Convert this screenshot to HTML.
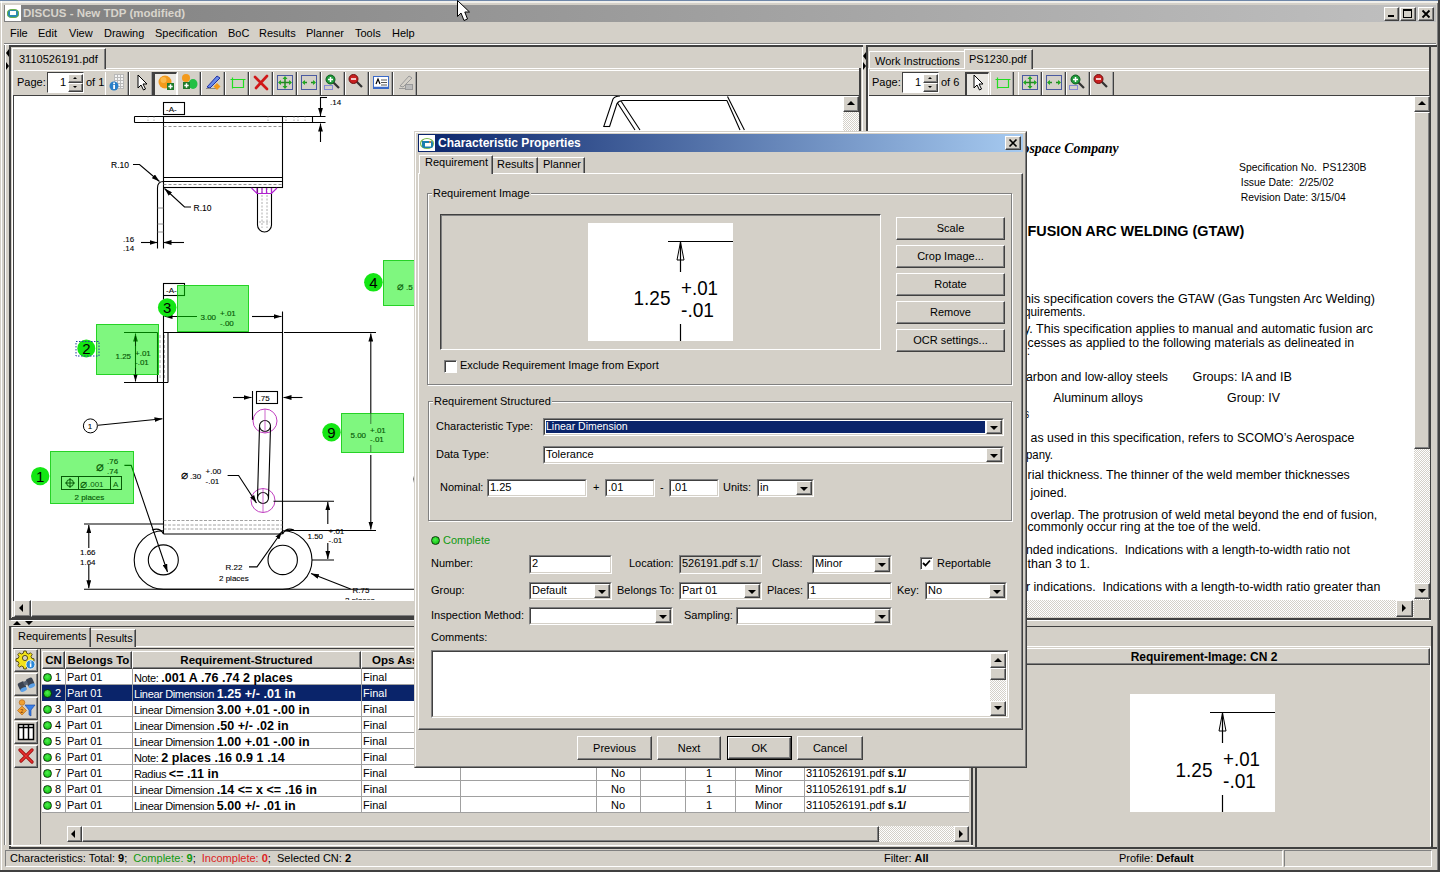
<!DOCTYPE html>
<html><head><meta charset="utf-8">
<style>
*{box-sizing:border-box;margin:0;padding:0}
html,body{width:1440px;height:872px;overflow:hidden;background:#d4d0c8;font-family:"Liberation Sans",sans-serif;font-size:11px;color:#000}
.a{position:absolute}
.t{position:absolute;white-space:nowrap;line-height:1}
.raised{background:#d4d0c8;border:1px solid;border-color:#fff #404040 #404040 #fff;box-shadow:inset -1px -1px 0 #808080}
.sunken{border:1px solid;border-color:#808080 #fff #fff #808080;box-shadow:inset 1px 1px 0 #404040}
.white{background:#fff}
.tb{position:absolute;width:23px;height:22px;background:#d4d0c8;border:1px solid;border-color:#fff #808080 #808080 #fff}
.hatch{background:repeating-conic-gradient(#d4d0c8 0 25%,#fff 0 50%) 0 0/2px 2px}
</style></head><body>
<!-- window frame -->
<div class="a" style="left:0;top:0;width:1440px;height:1px;background:#6f87a8"></div>
<div class="a" style="left:0;top:1px;width:1440px;height:2px;background:#f0efeb"></div><div class="a" style="left:1px;top:1px;width:1px;height:871px;background:#fff"></div>
<!-- title bar -->
<div class="a" style="left:4px;top:5px;width:1432px;height:17px;background:linear-gradient(90deg,#808080,#c0c0c0)"></div>
<div class="a" style="left:5px;top:5px;width:16px;height:16px;background:#fff"></div>
<div class="a" style="left:7px;top:9px;width:12px;height:9px;border-radius:40%;background:#2a8ab0;border:1px solid #6ab04a"></div>
<div class="a" style="left:10px;top:11px;width:6px;height:4px;background:#fff"></div>
<div class="t" style="left:23px;top:8px;font-size:11.5px;font-weight:bold;color:#d8d4cc">DISCUS - New TDP (modified)</div>
<div class="a raised" style="left:1384px;top:7px;width:15px;height:14px"></div>
<div class="a" style="left:1388px;top:15px;width:6px;height:2px;background:#000"></div>
<div class="a raised" style="left:1400px;top:7px;width:16px;height:14px"></div>
<div class="a" style="left:1403px;top:9px;width:9px;height:9px;border:1px solid #000;border-top-width:2px"></div>
<div class="a raised" style="left:1418px;top:7px;width:16px;height:14px"></div>
<svg class="a" style="left:1418px;top:7px" width="16" height="14" viewBox="0 0 16 14"><path d="M4.5 3.5l7 7M11.5 3.5l-7 7" stroke="#000" stroke-width="1.8"/></svg>
<div class="a" style="left:1438px;top:0;width:2px;height:872px;background:#404040"></div>
<div class="a" style="left:1437px;top:3px;width:1px;height:869px;background:#808080"></div>
<!-- menu -->
<div class="t" style="left:10px;top:28px;font-size:11px">File</div>
<div class="t" style="left:38px;top:28px;font-size:11px">Edit</div>
<div class="t" style="left:69px;top:28px;font-size:11px">View</div>
<div class="t" style="left:104px;top:28px;font-size:11px">Drawing</div>
<div class="t" style="left:155px;top:28px;font-size:11px">Specification</div>
<div class="t" style="left:228px;top:28px;font-size:11px">BoC</div>
<div class="t" style="left:259px;top:28px;font-size:11px">Results</div>
<div class="t" style="left:306px;top:28px;font-size:11px">Planner</div>
<div class="t" style="left:355px;top:28px;font-size:11px">Tools</div>
<div class="t" style="left:392px;top:28px;font-size:11px">Help</div>
<div class="a" style="left:4px;top:43px;width:1432px;height:1px;background:#808080"></div>
<div class="a" style="left:4px;top:44px;width:1432px;height:1px;background:#fff"></div>

<!-- LEFT PANE -->
<div class="a" style="left:4px;top:45px;width:1px;height:800px;background:#808080"></div>
<div class="a" style="left:5px;top:45px;width:1px;height:800px;background:#fff"></div>
<div class="a" style="left:9px;top:45px;width:2px;height:575px;background:#404040"></div>
<div class="a" style="left:9px;top:45px;width:854px;height:2px;background:#404040"></div>
<div class="a" style="left:6px;top:49px;width:0;height:0;border:4px solid transparent;border-right:3px solid #000;border-left:0"></div>
<div class="a" style="left:6px;top:62px;width:0;height:0;border:4px solid transparent;border-left:3px solid #000;border-right:0"></div>
<!-- tab -->
<div class="a" style="left:12px;top:48px;width:94px;height:21px;border-top:1px solid #fff;border-left:1px solid #fff;border-right:1px solid #404040;box-shadow:inset -1px 0 0 #808080"></div>
<div class="t" style="left:19px;top:54px;font-size:11px">3110526191.pdf</div>
<div class="a" style="left:12px;top:68px;width:1px;height:550px;background:#fff"></div>
<div class="a" style="left:106px;top:68px;width:754px;height:1px;background:#fff"></div>
<div class="a" style="left:859px;top:68px;width:2px;height:550px;background:#404040"></div>
<div class="a" style="left:12px;top:617px;width:849px;height:2px;background:#404040"></div>
<!-- toolbar -->
<div class="a" style="left:14px;top:70px;width:845px;height:25px;background:#d4d0c8;border-top:1px solid #fff"></div>
<div class="t" style="left:17px;top:77px;font-size:11px">Page:</div>
<div class="a" style="left:47px;top:72px;width:37px;height:21px;background:#fff;border:1px solid;border-color:#404040 #fff #fff #404040"></div>
<div class="t" style="left:60px;top:77px;font-size:11px">1</div>
<div class="a raised" style="left:68px;top:74px;width:15px;height:9px"></div>
<div class="a raised" style="left:68px;top:83px;width:15px;height:9px"></div><div class="a" style="left:73px;top:77px;border:2.5px solid transparent;border-bottom:2.5px solid #000;border-top:0"></div><div class="a" style="left:73px;top:86px;border:2.5px solid transparent;border-top:2.5px solid #000;border-bottom:0"></div>
<div class="t" style="left:86px;top:77px;font-size:11px">of 1</div>
<div class="a" style="left:105px;top:72px;width:24px;height:23px;border-left:1px solid #fff;border-right:1px solid #404040;box-shadow:inset -1px 0 0 #a0a0a0"></div>
<svg class="a" style="left:106px;top:72px" width="22" height="22" viewBox="0 0 22 22"><g stroke="#b8b8b8" stroke-width="1" fill="#f4f4f4"><rect x="8.5" y="2.5" width="9" height="14"/></g><path d="M11.5 2.5v14M14.5 2.5v14M8.5 5.5h9M8.5 8.5h9M8.5 11.5h9M8.5 14.5h9" stroke="#b8b8b8"/><circle cx="8" cy="14" r="4.5" fill="#2a7fc8"/><rect x="7.2" y="13" width="1.8" height="4" fill="#fff"/><rect x="7.2" y="10.6" width="1.8" height="1.6" fill="#fff"/></svg>
<div class="a" style="left:129px;top:72px;width:24px;height:23px;border-left:1px solid #fff;border-right:1px solid #404040;box-shadow:inset -1px 0 0 #a0a0a0"></div>
<svg class="a" style="left:130px;top:72px" width="22" height="22" viewBox="0 0 22 22"><path d="M8 3v13l3-3 2.5 5 2-1-2.5-5h4z" fill="#fff" stroke="#000" stroke-width="1"/></svg>
<div class="a" style="left:153px;top:72px;width:24px;height:23px;background:#e9e7e2;border-top:2px solid #404040;border-left:2px solid #404040;border-right:1px solid #fff"></div>
<svg class="a" style="left:154px;top:72px" width="22" height="22" viewBox="0 0 22 22"><circle cx="11" cy="10" r="6.5" fill="#f39a1c"/><circle cx="9.5" cy="8" r="3" fill="#ffd070" opacity=".6"/><rect x="13" y="11" width="7" height="7" fill="#1e7a2a"/><path d="M16.5 12.3v4.4M14.3 14.5h4.4" stroke="#fff" stroke-width="1.5"/></svg>
<div class="a" style="left:177px;top:72px;width:24px;height:23px;border-left:1px solid #fff;border-right:1px solid #404040;box-shadow:inset -1px 0 0 #a0a0a0"></div>
<svg class="a" style="left:178px;top:72px" width="22" height="22" viewBox="0 0 22 22"><circle cx="8" cy="6" r="4" fill="#f39a1c"/><ellipse cx="15" cy="12" rx="4.5" ry="5" fill="#22c044"/><rect x="5" y="10" width="7" height="7" fill="#1e7a2a"/><path d="M8.5 11.3v4.4M6.3 13.5h4.4" stroke="#fff" stroke-width="1.5"/></svg>
<div class="a" style="left:201px;top:72px;width:24px;height:23px;border-left:1px solid #fff;border-right:1px solid #404040;box-shadow:inset -1px 0 0 #a0a0a0"></div>
<svg class="a" style="left:202px;top:72px" width="22" height="22" viewBox="0 0 22 22"><path d="M5 15L15 4l3 2L8 16z" fill="#6a8ae8" stroke="#2030a0" stroke-width="1"/><path d="M4 16.5h10" stroke="#888"/><path d="M15 11l3.5 3.5L15 18l-3.5-3.5z" fill="#f39a1c"/></svg>
<div class="a" style="left:225px;top:72px;width:24px;height:23px;border-left:1px solid #fff;border-right:1px solid #404040;box-shadow:inset -1px 0 0 #a0a0a0"></div>
<svg class="a" style="left:226px;top:72px" width="22" height="22" viewBox="0 0 22 22"><path d="M4.5 7.5h15M6.5 5.5v11M6.5 15.5h11V7.5" stroke="#22dd22" stroke-width="1.2" fill="none"/></svg>
<div class="a" style="left:249px;top:72px;width:24px;height:23px;border-left:1px solid #fff;border-right:1px solid #404040;box-shadow:inset -1px 0 0 #a0a0a0"></div>
<svg class="a" style="left:250px;top:72px" width="22" height="22" viewBox="0 0 22 22"><path d="M5 5l12 12M17 4L6 16" stroke="#d01818" stroke-width="2.6" stroke-linecap="round"/></svg>
<div class="a" style="left:273px;top:72px;width:24px;height:23px;border-left:1px solid #fff;border-right:1px solid #404040;box-shadow:inset -1px 0 0 #a0a0a0"></div>
<svg class="a" style="left:274px;top:72px" width="22" height="22" viewBox="0 0 22 22"><rect x="3.5" y="3.5" width="15" height="14" fill="none" stroke="#4a5aa0"/><path d="M11 5v11M5 10.5h12" stroke="#228822" stroke-width="1.5"/><path d="M11 4l-2.5 3h5zM11 17l-2.5-3h5zM4 10.5l3-2.5v5zM18 10.5l-3-2.5v5z" fill="#22aa22"/></svg>
<div class="a" style="left:297px;top:72px;width:24px;height:23px;border-left:1px solid #fff;border-right:1px solid #404040;box-shadow:inset -1px 0 0 #a0a0a0"></div>
<svg class="a" style="left:298px;top:72px" width="22" height="22" viewBox="0 0 22 22"><rect x="3.5" y="3.5" width="15" height="14" fill="none" stroke="#4a5aa0"/><path d="M5 10.5h4M13 10.5h4" stroke="#228822" stroke-width="1.5"/><path d="M4 10.5l3-2.5v5zM18 10.5l-3-2.5v5z" fill="#22aa22"/></svg>
<div class="a" style="left:321px;top:72px;width:24px;height:23px;border-left:1px solid #fff;border-right:1px solid #404040;box-shadow:inset -1px 0 0 #a0a0a0"></div>
<svg class="a" style="left:322px;top:72px" width="22" height="22" viewBox="0 0 22 22"><path d="M11 10l6 6" stroke="#333" stroke-width="2.2"/><circle cx="8.5" cy="7.5" r="4.5" fill="#1f9a3a" stroke="#0b5a1b"/><path d="M8.5 5v5M6 7.5h5" stroke="#fff" stroke-width="1.5"/><rect x="2.5" y="13.5" width="8" height="4" fill="none" stroke="#3344dd" stroke-dasharray="1 1"/></svg>
<div class="a" style="left:345px;top:72px;width:24px;height:23px;border-left:1px solid #fff;border-right:1px solid #404040;box-shadow:inset -1px 0 0 #a0a0a0"></div>
<svg class="a" style="left:346px;top:72px" width="22" height="22" viewBox="0 0 22 22"><path d="M10 9l6 6" stroke="#333" stroke-width="2.2"/><circle cx="7.5" cy="7" r="4.5" fill="#c82020" stroke="#701010"/><path d="M5 7h5" stroke="#fff" stroke-width="1.5"/></svg>
<div class="a" style="left:369px;top:72px;width:24px;height:23px;border-left:1px solid #fff;border-right:1px solid #404040;box-shadow:inset -1px 0 0 #a0a0a0"></div>
<svg class="a" style="left:370px;top:72px" width="22" height="22" viewBox="0 0 22 22"><rect x="3.5" y="4.5" width="15" height="12" fill="#fff" stroke="#3a6ac8"/><path d="M3.5 15.5h15" stroke="#3a6ac8" stroke-width="1.5"/><path d="M6 12l2-5 2 5" stroke="#000" stroke-width="1.2" fill="none"/><path d="M11 8h6M11 10.5h6M11 13h6" stroke="#555"/></svg>
<div class="a" style="left:393px;top:72px;width:24px;height:23px;border-left:1px solid #fff;border-right:1px solid #404040;box-shadow:inset -1px 0 0 #a0a0a0"></div>
<svg class="a" style="left:394px;top:72px" width="22" height="22" viewBox="0 0 22 22"><path d="M6 14L15 4l3 2L9 15z" fill="none" stroke="#999"/><path d="M5 16.5h7" stroke="#999"/><rect x="11.5" y="12.5" width="7" height="5" fill="#bbb" stroke="#999"/></svg>
<!-- drawing area -->
<div class="a" style="left:13px;top:95px;width:846px;height:1px;background:#404040"></div>
<div class="a" style="left:13px;top:95px;width:1px;height:506px;background:#404040"></div>
<div class="a white" style="left:14px;top:96px;width:829px;height:504px;overflow:hidden" id="drawing"><svg class="a" style="left:0;top:0" width="829" height="504" viewBox="14 96 829 504" font-family="Liberation Sans, sans-serif">
<defs>
<marker id="ar" viewBox="0 0 10 6" refX="10" refY="3" markerWidth="8" markerHeight="5" orient="auto-start-reverse" markerUnits="userSpaceOnUse"><path d="M0 0L10 3L0 6z" fill="#000"/></marker>
</defs>
<g fill="none" stroke="#000" stroke-width="1.1">
<!-- top view -->
<rect x="163.5" y="102.5" width="21" height="12"/>
<path d="M134.5 116.5H325.5M134.5 122.5H325.5M134.5 116.5V122.5"/>
<rect x="163.5" y="116.5" width="119" height="71"/>
<path d="M163.5 177.5H282.5M163.5 181.5H282.5"/>
<path d="M163.5 126.5H282.5M163.5 184.5H282.5" stroke-dasharray="3 2" stroke="#777" stroke-width=".8"/>
<path d="M148 116.5V122.5M154 116.5V122.5M268 116.5V122.5M294 116.5V122.5M305 116.5V122.5" stroke="#999" stroke-width=".8" stroke-dasharray="1.5 1.5"/>
<path d="M163.5 181.5Q157.5 181.5 157.5 188V248.5M163.5 188V248.5"/>
<path d="M157.5 208h6M157.5 224h6M157.5 232h6" stroke="#777" stroke-width=".8"/>
<path d="M141 242.5H157.5" marker-end="url(#ar)"/><path d="M184 242.5H163.5" marker-end="url(#ar)"/>
<path d="M133 164.5H139.5L159.5 181.5" marker-end="url(#ar)"/>
<path d="M191 207H184.5L164.5 188.5" marker-end="url(#ar)"/>
<path d="M257.5 188V225A7 7 0 0 0 271.5 225V188"/>
<path d="M262 188V228M267 188V228M259 222H270" stroke="#999" stroke-width=".8" stroke-dasharray="2 1.5"/>
<path d="M251.5 188L257 193.5H271.5L277 188M257 188V193.5M262 188V193.5M266.5 188V193.5M271.5 188V193.5" stroke="#b020d0" stroke-width="1.2"/>
<path d="M320.5 142V123.5" marker-end="url(#ar)"/><path d="M320.5 97V116" marker-end="url(#ar)"/>
<path d="M320.5 97.5H327"/><path d="M312.5 116.5V122.5"/><path d="M286 116.5V122.5M298 116.5V122.5" stroke="#888" stroke-width=".8" stroke-dasharray="1.5 1.5"/>
<!-- upper right trapezoid -->
<path d="M603.75 127V126.5L613 99Q615 96 620 96M609.4 127L617 103.5Q619 100.5 623 100.5H727M617.5 103L635 130M621 101L640 130M727.5 96.5L744.4 130M726.9 100.5L740 130"/>
<path d="M603.75 126.5H609.4"/>
<!-- main view body -->
<rect x="163.5" y="283.5" width="21" height="12"/>
<path d="M163.5 295.5V534M282.5 311.5V534M163.5 332.5H282.5M284 332.5H376M163.5 534H282.5"/>
<path d="M157.5 332.5V382.5M168 332.5V382.5M124 382.5H168M124 332.5H157.5"/>
<path d="M160 335V380M164.5 335V380" stroke="#999" stroke-width=".8" stroke-dasharray="3 2"/>
<path d="M135.5 357V333.5" marker-end="url(#ar)"/><path d="M135.5 357V381.5" marker-end="url(#ar)"/>
<path d="M197 316.5H164.5" marker-end="url(#ar)"/><path d="M252 316.5H281.5" marker-end="url(#ar)"/>
<path d="M163.5 520.5H282.5M163.5 525H282.5M163.5 529H282.5" stroke="#888" stroke-width=".8" stroke-dasharray="3 1.5"/>
<path d="M98 425.3L162.5 418.8" marker-end="url(#ar)"/>
<!-- .75 -->
<rect x="256.5" y="391.5" width="21" height="12"/>
<path d="M233 397.5H251.5" marker-end="url(#ar)"/><path d="M302.5 397.5H283.5" marker-end="url(#ar)"/>
<path d="M252.5 391V420"/>
<!-- slot -->
<circle cx="265" cy="421" r="12" stroke="#c040c0" stroke-width="1"/>
<circle cx="263" cy="500.5" r="12" stroke="#c040c0" stroke-width="1"/>
<circle cx="265" cy="426" r="5.5"/>
<circle cx="263" cy="498" r="5.5"/>
<path d="M259.5 427L257.5 498M270.5 427L268.5 498"/>
<path d="M265 409V433M263 488.5V512" stroke="#c040c0" stroke-width=".8"/>
<path d="M227.6 475.5H238.6L256.5 503" marker-end="url(#ar)"/>
<!-- 5.00 dim -->
<path d="M370.8 413V333.5" marker-end="url(#ar)"/>
<path d="M370.8 455V529.5" marker-end="url(#ar)"/>
<path d="M286 530.5H376"/>
<!-- base -->
<path d="M84 524H163.5M84 589.3H430"/>
<path d="M88.8 548V525" marker-end="url(#ar)"/><path d="M88.8 565V588.3" marker-end="url(#ar)"/>
<path d="M163.5 530.7A29.3 29.3 0 0 0 163.5 589.3M282.7 530.7A29.3 29.3 0 0 1 282.7 589.3M163.5 589.3H282.7"/>
<path d="M163.5 534Q160 527 152 530M282.7 534Q286 527 294 530"/>
<circle cx="163.3" cy="559.9" r="15"/>
<circle cx="282.7" cy="559.9" r="14.7"/>
<path d="M124.4 465.4H131.2L167.5 572" marker-end="url(#ar)"/>
<path d="M249 566.9H257L282 531.5" marker-end="url(#ar)"/>
<path d="M273.5 501.2H334M312 560H334"/>
<path d="M327.8 524V502" marker-end="url(#ar)"/><path d="M327.8 543V559" marker-end="url(#ar)"/>
<path d="M350.6 589L311 573.5" marker-end="url(#ar)"/>
<path d="M416 472Q412 479 416 486"/>
</g>
<g font-size="8.5" fill="#000" stroke="#000" stroke-width=".1">
<text x="166" y="111.5" font-size="8">-A-</text>
<text x="166" y="292.5" font-size="8">-A-</text>
<text x="330" y="105" font-size="8">.14</text>
<text x="111" y="167.5">R.10</text>
<text x="193.5" y="210.5">R.10</text>
<text x="123" y="241.5" font-size="8">.16</text>
<text x="123" y="251" font-size="8">.14</text>
<text x="258.5" y="401" font-size="8">.75</text>
<text x="80" y="554.5" font-size="8">1.66</text>
<text x="80" y="564.5" font-size="8">1.64</text>
<text x="225.5" y="570" font-size="8">R.22</text>
<text x="219" y="581" font-size="8" font-weight="normal">2 places</text>
<text x="307.5" y="538.5" font-size="8">1.50</text>
<text x="328.5" y="533.5" font-size="8">+.01</text>
<text x="328.5" y="542.5" font-size="8">-.01</text>
<text x="352.5" y="593" font-size="8">R.75</text>
<text x="345" y="603" font-size="8" font-weight="normal">2 places</text>
<text x="181" y="479" font-size="12" font-weight="normal">&#x2300;</text>
<text x="190" y="479" font-size="8">.30</text>
<text x="205.5" y="474" font-size="8">+.00</text>
<text x="205.5" y="483.5" font-size="8">-.01</text>
<circle cx="90.4" cy="425.9" r="7" fill="#fff" stroke="#000" stroke-width="1"/>
<text x="87.8" y="429" font-size="8" font-weight="normal">1</text>
</g>
<!-- green annotations -->
<g fill="rgba(0,240,0,0.5)" stroke="rgba(0,200,0,0.8)" stroke-width="1">
<rect x="177.5" y="285.5" width="71" height="46"/>
<rect x="96.5" y="324.5" width="62" height="50"/>
<rect x="50.5" y="451.5" width="83" height="52"/>
<rect x="341.5" y="413.5" width="62" height="39"/>
<rect x="383.5" y="260.5" width="60" height="45"/>
</g>
<g fill="#075a07" font-size="8" stroke="#075a07" stroke-width=".15">
<text x="200.5" y="320">3.00</text>
<text x="220" y="316">+.01</text>
<text x="220" y="325.5">-.00</text>
<text x="115.5" y="359">1.25</text>
<text x="135" y="355.5">+.01</text>
<text x="135" y="364.5">-.01</text>
<text x="350.5" y="437.5">5.00</text>
<text x="370" y="432.5">+.01</text>
<text x="370" y="441.5">-.01</text>
<text x="74.5" y="500">2 places</text>
<text x="96" y="471" font-size="13">&#x2300;</text>
<text x="107" y="464">.76</text>
<text x="107" y="473.5">.74</text>
<text x="397" y="290" font-size="11">&#x2300;</text>
<text x="406" y="290">.5</text>
</g>
<g fill="none" stroke="#075a07" stroke-width="1">
<rect x="61.5" y="476.5" width="60" height="13"/>
<path d="M78.5 476.5V489.5M110.5 476.5V489.5"/>
<circle cx="70" cy="483" r="3.5"/>
<path d="M65 483H75M70 478V488"/>
<path d="M135.5 336V346M135.5 368V380" stroke="rgba(0,0,0,.5)"/>
<path d="M370.8 413V424M370.8 445V452" stroke="rgba(0,0,0,.5)"/>
</g>
<g fill="#075a07" font-size="8">
<text x="79.5" y="487.5" font-size="12">&#x2300;</text>
<text x="88" y="486.5">.001</text>
<text x="113" y="486.5">A</text>
</g>
<g fill="#14e614">
<circle cx="167.2" cy="307.5" r="9.3"/>
<circle cx="86.3" cy="348.4" r="9"/>
<circle cx="40.2" cy="476.1" r="9.2"/>
<circle cx="331.5" cy="432.2" r="9.2"/>
<circle cx="373.4" cy="282.3" r="9.3"/>
</g>
<g fill="#000" font-size="15" text-anchor="middle" font-weight="normal">
<text x="167.2" y="313">3</text>
<text x="86.3" y="354">2</text>
<text x="40.2" y="481.5">1</text>
<text x="331.5" y="437.5">9</text>
<text x="373.4" y="287.8">4</text>
</g>
<rect x="76" y="341.5" width="23" height="14.5" fill="none" stroke="#2040a0" stroke-width="1" stroke-dasharray="1.5 1.5"/>
</svg>
</div>
<div class="a hatch" style="left:843px;top:96px;width:16px;height:504px"></div>
<div class="a raised" style="left:843px;top:96px;width:16px;height:16px"></div>
<div class="a" style="left:847px;top:101px;border:4px solid transparent;border-bottom:4px solid #000;border-top:0"></div>
<div class="a hatch" style="left:14px;top:600px;width:845px;height:17px"></div>
<div class="a raised" style="left:14px;top:600px;width:17px;height:17px"></div>
<div class="a" style="left:19px;top:604px;border:4px solid transparent;border-right:4px solid #000;border-left:0"></div>
<div class="a raised" style="left:31px;top:600px;width:700px;height:17px"></div>
<!-- RIGHT PANE -->
<div class="a" style="left:862px;top:47px;width:1px;height:573px;background:#fff"></div>
<div class="a" style="left:863px;top:52px;border:4px solid transparent;border-right:3px solid #000;border-left:0"></div>
<div class="a" style="left:863px;top:62px;border:4px solid transparent;border-left:3px solid #000;border-right:0"></div>
<div class="a" style="left:866px;top:45px;width:2px;height:575px;background:#404040"></div>
<div class="a" style="left:866px;top:45px;width:571px;height:2px;background:#404040"></div>
<div class="a" style="left:869px;top:51px;width:95px;height:18px;border-top:1px solid #fff;border-left:1px solid #fff"></div>
<div class="t" style="left:875px;top:56px;font-size:11px">Work Instructions</div>
<div class="a" style="left:964px;top:49px;width:69px;height:20px;border-top:1px solid #fff;border-left:1px solid #fff;border-right:1px solid #404040;box-shadow:inset -1px 0 0 #808080;background:#d4d0c8"></div>
<div class="t" style="left:969px;top:54px;font-size:11px">PS1230.pdf</div>
<div class="a" style="left:868px;top:68px;width:1px;height:550px;background:#fff"></div>
<div class="a" style="left:868px;top:68px;width:96px;height:1px;background:#fff"></div>
<div class="a" style="left:1033px;top:68px;width:397px;height:1px;background:#fff"></div>
<div class="a" style="left:1429px;top:47px;width:2px;height:573px;background:#404040"></div>
<div class="a" style="left:868px;top:618px;width:563px;height:2px;background:#404040"></div>
<div class="a" style="left:870px;top:70px;width:559px;height:25px;border-top:1px solid #fff"></div>
<div class="t" style="left:872px;top:77px;font-size:11px">Page:</div>
<div class="a" style="left:902px;top:72px;width:37px;height:21px;background:#fff;border:1px solid;border-color:#404040 #fff #fff #404040"></div>
<div class="t" style="left:915px;top:77px;font-size:11px">1</div>
<div class="a raised" style="left:923px;top:74px;width:15px;height:9px"></div>
<div class="a raised" style="left:923px;top:83px;width:15px;height:9px"></div><div class="a" style="left:928px;top:77px;border:2.5px solid transparent;border-bottom:2.5px solid #000;border-top:0"></div><div class="a" style="left:928px;top:86px;border:2.5px solid transparent;border-top:2.5px solid #000;border-bottom:0"></div>
<div class="t" style="left:941px;top:77px;font-size:11px">of 6</div>
<div class="a" style="left:965px;top:72px;width:24px;height:23px;background:#e9e7e2;border-top:2px solid #404040;border-left:2px solid #404040;border-right:1px solid #fff"></div>
<svg class="a" style="left:966px;top:72px" width="22" height="22" viewBox="0 0 22 22"><path d="M8 3v13l3-3 2.5 5 2-1-2.5-5h4z" fill="#fff" stroke="#000" stroke-width="1"/></svg>
<div class="a" style="left:990px;top:72px;width:24px;height:23px;border-left:1px solid #fff;border-right:1px solid #404040;box-shadow:inset -1px 0 0 #a0a0a0"></div>
<svg class="a" style="left:991px;top:72px" width="22" height="22" viewBox="0 0 22 22"><path d="M4.5 7.5h15M6.5 5.5v11M6.5 15.5h11V7.5" stroke="#22dd22" stroke-width="1.2" fill="none"/></svg>
<div class="a" style="left:1018px;top:72px;width:24px;height:23px;border-left:1px solid #fff;border-right:1px solid #404040;box-shadow:inset -1px 0 0 #a0a0a0"></div>
<svg class="a" style="left:1019px;top:72px" width="22" height="22" viewBox="0 0 22 22"><rect x="3.5" y="3.5" width="15" height="14" fill="none" stroke="#4a5aa0"/><path d="M11 5v11M5 10.5h12" stroke="#228822" stroke-width="1.5"/><path d="M11 4l-2.5 3h5zM11 17l-2.5-3h5zM4 10.5l3-2.5v5zM18 10.5l-3-2.5v5z" fill="#22aa22"/></svg>
<div class="a" style="left:1042px;top:72px;width:24px;height:23px;border-left:1px solid #fff;border-right:1px solid #404040;box-shadow:inset -1px 0 0 #a0a0a0"></div>
<svg class="a" style="left:1043px;top:72px" width="22" height="22" viewBox="0 0 22 22"><rect x="3.5" y="3.5" width="15" height="14" fill="none" stroke="#4a5aa0"/><path d="M5 10.5h4M13 10.5h4" stroke="#228822" stroke-width="1.5"/><path d="M4 10.5l3-2.5v5zM18 10.5l-3-2.5v5z" fill="#22aa22"/></svg>
<div class="a" style="left:1066px;top:72px;width:24px;height:23px;border-left:1px solid #fff;border-right:1px solid #404040;box-shadow:inset -1px 0 0 #a0a0a0"></div>
<svg class="a" style="left:1067px;top:72px" width="22" height="22" viewBox="0 0 22 22"><path d="M11 10l6 6" stroke="#333" stroke-width="2.2"/><circle cx="8.5" cy="7.5" r="4.5" fill="#1f9a3a" stroke="#0b5a1b"/><path d="M8.5 5v5M6 7.5h5" stroke="#fff" stroke-width="1.5"/><rect x="2.5" y="13.5" width="8" height="4" fill="none" stroke="#3344dd" stroke-dasharray="1 1"/></svg>
<div class="a" style="left:1090px;top:72px;width:24px;height:23px;border-left:1px solid #fff;border-right:1px solid #404040;box-shadow:inset -1px 0 0 #a0a0a0"></div>
<svg class="a" style="left:1091px;top:72px" width="22" height="22" viewBox="0 0 22 22"><path d="M10 9l6 6" stroke="#333" stroke-width="2.2"/><circle cx="7.5" cy="7" r="4.5" fill="#c82020" stroke="#701010"/><path d="M5 7h5" stroke="#fff" stroke-width="1.5"/></svg>
<div class="a" style="left:869px;top:95px;width:560px;height:1px;background:#404040"></div>
<div class="a white" style="left:869px;top:96px;width:546px;height:504px;overflow:hidden"><svg class="a" style="left:0;top:-2px" width="546" height="504" viewBox="869 96 546 504" font-family="Liberation Sans, sans-serif" fill="#000"><text x="950" y="155" textLength="168.70000000000005" lengthAdjust="spacingAndGlyphs" font-size="14.5" font-family="Liberation Serif, serif" font-weight="bold" font-style="italic">SCOMO Aerospace Company</text>
<text x="1239" y="172.5" textLength="127.40000000000009" lengthAdjust="spacingAndGlyphs" font-size="11" >Specification No.&#160; PS1230B</text>
<text x="1240.8" y="188" textLength="92.90000000000009" lengthAdjust="spacingAndGlyphs" font-size="11" >Issue Date:&#160; 2/25/02</text>
<text x="1240.8" y="203" textLength="104.90000000000009" lengthAdjust="spacingAndGlyphs" font-size="11" >Revision Date: 3/15/04</text>
<text x="1027.5" y="238" textLength="216.70000000000005" lengthAdjust="spacingAndGlyphs" font-size="14.5" font-weight="bold">FUSION ARC WELDING (GTAW)</text>
<text x="1024" y="305" textLength="351" lengthAdjust="spacingAndGlyphs" font-size="12.5" >his specification covers the GTAW (Gas Tungsten Arc Welding)</text>
<text x="1024" y="317.5" textLength="61.5" lengthAdjust="spacingAndGlyphs" font-size="12.5" >quirements.</text>
<text x="1024" y="335" textLength="349" lengthAdjust="spacingAndGlyphs" font-size="12.5" >y. This specification applies to manual and automatic fusion arc</text>
<text x="1027.5" y="348.5" textLength="326.5" lengthAdjust="spacingAndGlyphs" font-size="12.5" >cesses as applied to the following materials as delineated in</text>
<text x="1027" y="357" textLength="3" lengthAdjust="spacingAndGlyphs" font-size="12.5" >:</text>
<text x="1026" y="383" textLength="142" lengthAdjust="spacingAndGlyphs" font-size="12.5" >arbon and low-alloy steels</text>
<text x="1192.6" y="383" textLength="99.40000000000009" lengthAdjust="spacingAndGlyphs" font-size="12.5" >Groups: IA and IB</text>
<text x="1053.3" y="403.5" textLength="89.5" lengthAdjust="spacingAndGlyphs" font-size="12.5" >Aluminum alloys</text>
<text x="1227" y="403.5" textLength="53" lengthAdjust="spacingAndGlyphs" font-size="12.5" >Group: IV</text>
<text x="1025" y="420" textLength="4" lengthAdjust="spacingAndGlyphs" font-size="12.5" >s</text>
<text x="1030.5" y="444" textLength="323.9000000000001" lengthAdjust="spacingAndGlyphs" font-size="12.5" >as used in this specification, refers to SCOMO&#8217;s Aerospace</text>
<text x="1026" y="461" textLength="27" lengthAdjust="spacingAndGlyphs" font-size="12.5" >pany.</text>
<text x="1027.5" y="481" textLength="322.29999999999995" lengthAdjust="spacingAndGlyphs" font-size="12.5" >rial thickness. The thinner of the weld member thicknesses</text>
<text x="1030.5" y="499" textLength="36.5" lengthAdjust="spacingAndGlyphs" font-size="12.5" >joined.</text>
<text x="1030.5" y="520.5" textLength="346.79999999999995" lengthAdjust="spacingAndGlyphs" font-size="12.5" >overlap. The protrusion of weld metal beyond the end of fusion,</text>
<text x="1027.5" y="533" textLength="233.5" lengthAdjust="spacingAndGlyphs" font-size="12.5" >commonly occur ring at the toe of the weld.</text>
<text x="1026" y="556" textLength="323.79999999999995" lengthAdjust="spacingAndGlyphs" font-size="12.5" >nded indications.&#160; Indications with a length-to-width ratio not</text>
<text x="1027.5" y="569.5" textLength="62.5" lengthAdjust="spacingAndGlyphs" font-size="12.5" >than 3 to 1.</text>
<text x="1026" y="592.5" textLength="354.4000000000001" lengthAdjust="spacingAndGlyphs" font-size="12.5" >r indications.&#160; Indications with a length-to-width ratio greater than</text></svg></div>
<div class="a hatch" style="left:1414px;top:96px;width:16px;height:504px"></div>
<div class="a raised" style="left:1414px;top:96px;width:16px;height:16px"></div>
<div class="a" style="left:1418px;top:101px;border:4px solid transparent;border-bottom:4px solid #000;border-top:0"></div>
<div class="a raised" style="left:1414px;top:112px;width:16px;height:337px"></div>
<div class="a raised" style="left:1414px;top:583px;width:16px;height:16px"></div>
<div class="a" style="left:1418px;top:589px;border:4px solid transparent;border-top:4px solid #000;border-bottom:0"></div>
<div class="a hatch" style="left:869px;top:600px;width:545px;height:17px"></div>
<div class="a raised" style="left:1396px;top:600px;width:17px;height:17px"></div>
<div class="a" style="left:1402px;top:604px;border:4px solid transparent;border-left:4px solid #000;border-right:0"></div>
<!-- BOTTOM -->
<div class="a" style="left:9px;top:618px;width:854px;height:2px;background:#404040"></div>
<div class="a" style="left:11px;top:620px;width:1420px;height:1px;background:#fff"></div>
<div class="a" style="left:13px;top:621px;border:4px solid transparent;border-bottom:4px solid #000;border-top:0"></div>
<div class="a" style="left:25px;top:621px;border:4px solid transparent;border-top:4px solid #000;border-bottom:0"></div>
<div class="a" style="left:9px;top:626px;width:2px;height:222px;background:#404040"></div>
<div class="a" style="left:9px;top:626px;width:964px;height:1px;background:#404040"></div>
<div class="a" style="left:12px;top:627px;width:79px;height:20px;border-top:1px solid #fff;border-left:1px solid #fff;border-right:1px solid #404040;box-shadow:inset -1px 0 0 #808080"></div>
<div class="t" style="left:18px;top:631px;font-size:11px">Requirements</div>
<div class="a" style="left:91px;top:629px;width:45px;height:18px;border-top:1px solid #fff;border-right:1px solid #404040;box-shadow:inset -1px 0 0 #808080"></div>
<div class="t" style="left:96px;top:633px;font-size:11px">Results</div>
<div class="a" style="left:12px;top:646px;width:1px;height:199px;background:#fff"></div>
<div class="a" style="left:136px;top:646px;width:836px;height:1px;background:#fff"></div>
<div class="a" style="left:13px;top:648px;width:959px;height:1px;background:#404040"></div>
<div class="a raised" style="left:14px;top:649px;width:24px;height:23px"></div><svg class="a" style="left:15px;top:649px" width="22" height="22" viewBox="0 0 22 22"><g transform="translate(10 9)"><path d="M-1.2-7h2.4l.5 2.2 1.9.8 1.9-1.2 1.7 1.7-1.2 1.9.8 1.9 2.2.5v2.4l-2.2.5-.8 1.9 1.2 1.9-1.7 1.7-1.9-1.2-1.9.8-.5 2.2h-2.4l-.5-2.2-1.9-.8-1.9 1.2-1.7-1.7 1.2-1.9-.8-1.9-2.2-.5v-2.4l2.2-.5.8-1.9-1.2-1.9 1.7-1.7 1.9 1.2 1.9-.8z" fill="#f2e21a" stroke="#3a3000" stroke-width=".8"/><circle r="2.6" fill="#d4d0c8" stroke="#3a3000" stroke-width=".8"/></g><circle cx="15.5" cy="15.5" r="4.5" fill="#2a88d8" stroke="#fff" stroke-width=".8"/><rect x="14.8" y="14.3" width="1.6" height="3.8" fill="#fff"/><rect x="14.8" y="12.3" width="1.6" height="1.3" fill="#fff"/></svg>
<div class="a raised" style="left:14px;top:673px;width:24px;height:23px"></div><svg class="a" style="left:15px;top:673px" width="22" height="22" viewBox="0 0 22 22"><g transform="rotate(-25 11 11)"><rect x="3" y="7" width="7" height="8" rx="2" fill="#3a4250"/><rect x="12" y="7" width="7" height="8" rx="2" fill="#3a4250"/><rect x="9" y="8" width="4" height="4" fill="#556070"/><ellipse cx="6.5" cy="15" rx="3.5" ry="2" fill="#5aa0e8"/><ellipse cx="15.5" cy="15" rx="3.5" ry="2" fill="#5aa0e8"/></g></svg>
<div class="a raised" style="left:14px;top:697px;width:24px;height:23px"></div><svg class="a" style="left:15px;top:697px" width="22" height="22" viewBox="0 0 22 22"><circle cx="7" cy="5.5" r="2.8" fill="#f0a030" stroke="#b06010" stroke-width=".6"/><path d="M7 9l4.5 4.5L7 18l-4.5-4.5z" fill="#f0a030" stroke="#b06010" stroke-width=".6"/><text x="5.2" y="15.5" font-size="5.5" fill="#703000" font-family="Liberation Sans">2</text><path d="M10 8h10l-4 5v6l-2-1.2V13z" fill="#3a80e8" stroke="#1040a0" stroke-width=".6"/></svg>
<div class="a raised" style="left:14px;top:721px;width:24px;height:23px"></div><svg class="a" style="left:15px;top:721px" width="22" height="22" viewBox="0 0 22 22"><rect x="3.5" y="3.5" width="15" height="15" fill="#fff" stroke="#000" stroke-width="1.5"/><path d="M3.5 6.5h15M8.5 3.5v15M13.5 3.5v15" stroke="#000" stroke-width="1.5"/></svg>
<div class="a raised" style="left:14px;top:745px;width:24px;height:23px"></div><svg class="a" style="left:15px;top:745px" width="22" height="22" viewBox="0 0 22 22"><path d="M5 5l12 12M17 5L6 16" stroke="#a01010" stroke-width="3.2" stroke-linecap="round"/><path d="M5 5l12 12M17 5L6 16" stroke="#e83030" stroke-width="1.6" stroke-linecap="round"/></svg>
<div class="a" style="left:40px;top:648px;width:1px;height:196px;background:#404040"></div>
<div class="a" style="left:41px;top:649px;width:930px;height:195px;background:#d4d0c8"></div>
<div class="a raised" style="left:42px;top:651px;width:23px;height:18px;overflow:hidden"><div class="t" style="left:0px;top:3px;width:100%;text-align:center;font-weight:bold;font-size:11.5px">CN</div></div>
<div class="a raised" style="left:65px;top:651px;width:67px;height:18px;overflow:hidden"><div class="t" style="left:0;top:3px;width:100%;text-align:center;font-weight:bold;font-size:11.5px">Belongs To</div></div>
<div class="a raised" style="left:132px;top:651px;width:229px;height:18px;overflow:hidden"><div class="t" style="left:0px;top:3px;width:100%;text-align:center;font-weight:bold;font-size:11.5px">Requirement-Structured</div></div>
<div class="a raised" style="left:361px;top:651px;width:99px;height:18px;overflow:hidden"><div class="t" style="left:0;top:3px;width:100%;text-align:center;font-weight:bold;font-size:11.5px">Ops Assigned</div></div>
<div class="a raised" style="left:460px;top:651px;width:136px;height:18px;overflow:hidden"><div class="t" style="left:0px;top:3px;font-weight:bold;font-size:11.5px"></div></div>
<div class="a raised" style="left:596px;top:651px;width:44px;height:18px;overflow:hidden"><div class="t" style="left:0px;top:3px;font-weight:bold;font-size:11.5px"></div></div>
<div class="a raised" style="left:640px;top:651px;width:45px;height:18px;overflow:hidden"><div class="t" style="left:0px;top:3px;font-weight:bold;font-size:11.5px"></div></div>
<div class="a raised" style="left:685px;top:651px;width:50px;height:18px;overflow:hidden"><div class="t" style="left:0px;top:3px;font-weight:bold;font-size:11.5px"></div></div>
<div class="a raised" style="left:735px;top:651px;width:69px;height:18px;overflow:hidden"><div class="t" style="left:0px;top:3px;font-weight:bold;font-size:11.5px"></div></div>
<div class="a raised" style="left:804px;top:651px;width:165px;height:18px;overflow:hidden"><div class="t" style="left:0px;top:3px;font-weight:bold;font-size:11.5px"></div></div>
<div class="a" style="left:42px;top:669px;width:927px;height:16px;background:#fff;border-bottom:1px solid #a0a0a0"></div>
<div class="a" style="left:65px;top:669px;width:1px;height:16px;background:#a0a0a0"></div>
<div class="a" style="left:132px;top:669px;width:1px;height:16px;background:#a0a0a0"></div>
<div class="a" style="left:361px;top:669px;width:1px;height:16px;background:#a0a0a0"></div>
<div class="a" style="left:460px;top:669px;width:1px;height:16px;background:#a0a0a0"></div>
<div class="a" style="left:596px;top:669px;width:1px;height:16px;background:#a0a0a0"></div>
<div class="a" style="left:640px;top:669px;width:1px;height:16px;background:#a0a0a0"></div>
<div class="a" style="left:685px;top:669px;width:1px;height:16px;background:#a0a0a0"></div>
<div class="a" style="left:735px;top:669px;width:1px;height:16px;background:#a0a0a0"></div>
<div class="a" style="left:804px;top:669px;width:1px;height:16px;background:#a0a0a0"></div>
<div class="a" style="left:43px;top:673px;width:9px;height:9px;border-radius:50%;background:radial-gradient(circle at 45% 40%,#50f050,#18c818 70%);border:1px solid #0a3a0a"></div>
<div class="t" style="left:55px;top:672px;font-size:11px;color:#000">1</div>
<div class="t" style="left:67px;top:672px;font-size:11px;color:#000">Part 01</div>
<div class="t" style="left:134px;top:672px;font-size:11px;letter-spacing:-0.35px;color:#000">Note: <b style="font-size:12.5px;letter-spacing:0.05px">.001 A .76 .74 2 places</b></div>
<div class="t" style="left:363px;top:672px;font-size:11px;color:#000">Final</div>
<div class="t" style="left:611px;top:672px;font-size:11px">No</div>
<div class="t" style="left:706px;top:672px;font-size:11px">1</div>
<div class="t" style="left:755px;top:672px;font-size:11px">Minor</div>
<div class="t" style="left:806px;top:672px;font-size:11px">3110526191.pdf <b>s.1/</b></div>
<div class="a" style="left:42px;top:685px;width:927px;height:16px;background:#fff;border-bottom:1px solid #a0a0a0"></div>
<div class="a" style="left:42px;top:685px;width:927px;height:16px;background:#0a246a"></div>
<div class="a" style="left:65px;top:685px;width:1px;height:16px;background:#a0a0a0"></div>
<div class="a" style="left:132px;top:685px;width:1px;height:16px;background:#a0a0a0"></div>
<div class="a" style="left:361px;top:685px;width:1px;height:16px;background:#a0a0a0"></div>
<div class="a" style="left:460px;top:685px;width:1px;height:16px;background:#a0a0a0"></div>
<div class="a" style="left:596px;top:685px;width:1px;height:16px;background:#a0a0a0"></div>
<div class="a" style="left:640px;top:685px;width:1px;height:16px;background:#a0a0a0"></div>
<div class="a" style="left:685px;top:685px;width:1px;height:16px;background:#a0a0a0"></div>
<div class="a" style="left:735px;top:685px;width:1px;height:16px;background:#a0a0a0"></div>
<div class="a" style="left:804px;top:685px;width:1px;height:16px;background:#a0a0a0"></div>
<div class="a" style="left:43px;top:689px;width:9px;height:9px;border-radius:50%;background:radial-gradient(circle at 45% 40%,#50f050,#18c818 70%);border:1px solid #0a3a0a"></div>
<div class="t" style="left:55px;top:688px;font-size:11px;color:#fff">2</div>
<div class="t" style="left:67px;top:688px;font-size:11px;color:#fff">Part 01</div>
<div class="t" style="left:134px;top:688px;font-size:11px;letter-spacing:-0.35px;color:#fff">Linear Dimension <b style="font-size:12.5px;letter-spacing:0.05px">1.25 +/- .01 in</b></div>
<div class="t" style="left:363px;top:688px;font-size:11px;color:#fff">Final</div>
<div class="t" style="left:611px;top:688px;font-size:11px">No</div>
<div class="t" style="left:706px;top:688px;font-size:11px">1</div>
<div class="t" style="left:755px;top:688px;font-size:11px">Minor</div>
<div class="t" style="left:806px;top:688px;font-size:11px">3110526191.pdf <b>s.1/</b></div>
<div class="a" style="left:42px;top:701px;width:927px;height:16px;background:#fff;border-bottom:1px solid #a0a0a0"></div>
<div class="a" style="left:65px;top:701px;width:1px;height:16px;background:#a0a0a0"></div>
<div class="a" style="left:132px;top:701px;width:1px;height:16px;background:#a0a0a0"></div>
<div class="a" style="left:361px;top:701px;width:1px;height:16px;background:#a0a0a0"></div>
<div class="a" style="left:460px;top:701px;width:1px;height:16px;background:#a0a0a0"></div>
<div class="a" style="left:596px;top:701px;width:1px;height:16px;background:#a0a0a0"></div>
<div class="a" style="left:640px;top:701px;width:1px;height:16px;background:#a0a0a0"></div>
<div class="a" style="left:685px;top:701px;width:1px;height:16px;background:#a0a0a0"></div>
<div class="a" style="left:735px;top:701px;width:1px;height:16px;background:#a0a0a0"></div>
<div class="a" style="left:804px;top:701px;width:1px;height:16px;background:#a0a0a0"></div>
<div class="a" style="left:43px;top:705px;width:9px;height:9px;border-radius:50%;background:radial-gradient(circle at 45% 40%,#50f050,#18c818 70%);border:1px solid #0a3a0a"></div>
<div class="t" style="left:55px;top:704px;font-size:11px;color:#000">3</div>
<div class="t" style="left:67px;top:704px;font-size:11px;color:#000">Part 01</div>
<div class="t" style="left:134px;top:704px;font-size:11px;letter-spacing:-0.35px;color:#000">Linear Dimension <b style="font-size:12.5px;letter-spacing:0.05px">3.00 +.01 -.00 in</b></div>
<div class="t" style="left:363px;top:704px;font-size:11px;color:#000">Final</div>
<div class="t" style="left:611px;top:704px;font-size:11px">No</div>
<div class="t" style="left:706px;top:704px;font-size:11px">1</div>
<div class="t" style="left:755px;top:704px;font-size:11px">Minor</div>
<div class="t" style="left:806px;top:704px;font-size:11px">3110526191.pdf <b>s.1/</b></div>
<div class="a" style="left:42px;top:717px;width:927px;height:16px;background:#fff;border-bottom:1px solid #a0a0a0"></div>
<div class="a" style="left:65px;top:717px;width:1px;height:16px;background:#a0a0a0"></div>
<div class="a" style="left:132px;top:717px;width:1px;height:16px;background:#a0a0a0"></div>
<div class="a" style="left:361px;top:717px;width:1px;height:16px;background:#a0a0a0"></div>
<div class="a" style="left:460px;top:717px;width:1px;height:16px;background:#a0a0a0"></div>
<div class="a" style="left:596px;top:717px;width:1px;height:16px;background:#a0a0a0"></div>
<div class="a" style="left:640px;top:717px;width:1px;height:16px;background:#a0a0a0"></div>
<div class="a" style="left:685px;top:717px;width:1px;height:16px;background:#a0a0a0"></div>
<div class="a" style="left:735px;top:717px;width:1px;height:16px;background:#a0a0a0"></div>
<div class="a" style="left:804px;top:717px;width:1px;height:16px;background:#a0a0a0"></div>
<div class="a" style="left:43px;top:721px;width:9px;height:9px;border-radius:50%;background:radial-gradient(circle at 45% 40%,#50f050,#18c818 70%);border:1px solid #0a3a0a"></div>
<div class="t" style="left:55px;top:720px;font-size:11px;color:#000">4</div>
<div class="t" style="left:67px;top:720px;font-size:11px;color:#000">Part 01</div>
<div class="t" style="left:134px;top:720px;font-size:11px;letter-spacing:-0.35px;color:#000">Linear Dimension <b style="font-size:12.5px;letter-spacing:0.05px">.50 +/- .02 in</b></div>
<div class="t" style="left:363px;top:720px;font-size:11px;color:#000">Final</div>
<div class="t" style="left:611px;top:720px;font-size:11px">No</div>
<div class="t" style="left:706px;top:720px;font-size:11px">1</div>
<div class="t" style="left:755px;top:720px;font-size:11px">Minor</div>
<div class="t" style="left:806px;top:720px;font-size:11px">3110526191.pdf <b>s.1/</b></div>
<div class="a" style="left:42px;top:733px;width:927px;height:16px;background:#fff;border-bottom:1px solid #a0a0a0"></div>
<div class="a" style="left:65px;top:733px;width:1px;height:16px;background:#a0a0a0"></div>
<div class="a" style="left:132px;top:733px;width:1px;height:16px;background:#a0a0a0"></div>
<div class="a" style="left:361px;top:733px;width:1px;height:16px;background:#a0a0a0"></div>
<div class="a" style="left:460px;top:733px;width:1px;height:16px;background:#a0a0a0"></div>
<div class="a" style="left:596px;top:733px;width:1px;height:16px;background:#a0a0a0"></div>
<div class="a" style="left:640px;top:733px;width:1px;height:16px;background:#a0a0a0"></div>
<div class="a" style="left:685px;top:733px;width:1px;height:16px;background:#a0a0a0"></div>
<div class="a" style="left:735px;top:733px;width:1px;height:16px;background:#a0a0a0"></div>
<div class="a" style="left:804px;top:733px;width:1px;height:16px;background:#a0a0a0"></div>
<div class="a" style="left:43px;top:737px;width:9px;height:9px;border-radius:50%;background:radial-gradient(circle at 45% 40%,#50f050,#18c818 70%);border:1px solid #0a3a0a"></div>
<div class="t" style="left:55px;top:736px;font-size:11px;color:#000">5</div>
<div class="t" style="left:67px;top:736px;font-size:11px;color:#000">Part 01</div>
<div class="t" style="left:134px;top:736px;font-size:11px;letter-spacing:-0.35px;color:#000">Linear Dimension <b style="font-size:12.5px;letter-spacing:0.05px">1.00 +.01 -.00 in</b></div>
<div class="t" style="left:363px;top:736px;font-size:11px;color:#000">Final</div>
<div class="t" style="left:611px;top:736px;font-size:11px">No</div>
<div class="t" style="left:706px;top:736px;font-size:11px">1</div>
<div class="t" style="left:755px;top:736px;font-size:11px">Minor</div>
<div class="t" style="left:806px;top:736px;font-size:11px">3110526191.pdf <b>s.1/</b></div>
<div class="a" style="left:42px;top:749px;width:927px;height:16px;background:#fff;border-bottom:1px solid #a0a0a0"></div>
<div class="a" style="left:65px;top:749px;width:1px;height:16px;background:#a0a0a0"></div>
<div class="a" style="left:132px;top:749px;width:1px;height:16px;background:#a0a0a0"></div>
<div class="a" style="left:361px;top:749px;width:1px;height:16px;background:#a0a0a0"></div>
<div class="a" style="left:460px;top:749px;width:1px;height:16px;background:#a0a0a0"></div>
<div class="a" style="left:596px;top:749px;width:1px;height:16px;background:#a0a0a0"></div>
<div class="a" style="left:640px;top:749px;width:1px;height:16px;background:#a0a0a0"></div>
<div class="a" style="left:685px;top:749px;width:1px;height:16px;background:#a0a0a0"></div>
<div class="a" style="left:735px;top:749px;width:1px;height:16px;background:#a0a0a0"></div>
<div class="a" style="left:804px;top:749px;width:1px;height:16px;background:#a0a0a0"></div>
<div class="a" style="left:43px;top:753px;width:9px;height:9px;border-radius:50%;background:radial-gradient(circle at 45% 40%,#50f050,#18c818 70%);border:1px solid #0a3a0a"></div>
<div class="t" style="left:55px;top:752px;font-size:11px;color:#000">6</div>
<div class="t" style="left:67px;top:752px;font-size:11px;color:#000">Part 01</div>
<div class="t" style="left:134px;top:752px;font-size:11px;letter-spacing:-0.35px;color:#000">Note: <b style="font-size:12.5px;letter-spacing:0.05px">2 places .16 0.9 1 .14</b></div>
<div class="t" style="left:363px;top:752px;font-size:11px;color:#000">Final</div>
<div class="t" style="left:611px;top:752px;font-size:11px">No</div>
<div class="t" style="left:706px;top:752px;font-size:11px">1</div>
<div class="t" style="left:755px;top:752px;font-size:11px">Minor</div>
<div class="t" style="left:806px;top:752px;font-size:11px">3110526191.pdf <b>s.1/</b></div>
<div class="a" style="left:42px;top:765px;width:927px;height:16px;background:#fff;border-bottom:1px solid #a0a0a0"></div>
<div class="a" style="left:65px;top:765px;width:1px;height:16px;background:#a0a0a0"></div>
<div class="a" style="left:132px;top:765px;width:1px;height:16px;background:#a0a0a0"></div>
<div class="a" style="left:361px;top:765px;width:1px;height:16px;background:#a0a0a0"></div>
<div class="a" style="left:460px;top:765px;width:1px;height:16px;background:#a0a0a0"></div>
<div class="a" style="left:596px;top:765px;width:1px;height:16px;background:#a0a0a0"></div>
<div class="a" style="left:640px;top:765px;width:1px;height:16px;background:#a0a0a0"></div>
<div class="a" style="left:685px;top:765px;width:1px;height:16px;background:#a0a0a0"></div>
<div class="a" style="left:735px;top:765px;width:1px;height:16px;background:#a0a0a0"></div>
<div class="a" style="left:804px;top:765px;width:1px;height:16px;background:#a0a0a0"></div>
<div class="a" style="left:43px;top:769px;width:9px;height:9px;border-radius:50%;background:radial-gradient(circle at 45% 40%,#50f050,#18c818 70%);border:1px solid #0a3a0a"></div>
<div class="t" style="left:55px;top:768px;font-size:11px;color:#000">7</div>
<div class="t" style="left:67px;top:768px;font-size:11px;color:#000">Part 01</div>
<div class="t" style="left:134px;top:768px;font-size:11px;letter-spacing:-0.35px;color:#000">Radius <b style="font-size:12.5px;letter-spacing:0.05px">&lt;= .11 in</b></div>
<div class="t" style="left:363px;top:768px;font-size:11px;color:#000">Final</div>
<div class="t" style="left:611px;top:768px;font-size:11px">No</div>
<div class="t" style="left:706px;top:768px;font-size:11px">1</div>
<div class="t" style="left:755px;top:768px;font-size:11px">Minor</div>
<div class="t" style="left:806px;top:768px;font-size:11px">3110526191.pdf <b>s.1/</b></div>
<div class="a" style="left:42px;top:781px;width:927px;height:16px;background:#fff;border-bottom:1px solid #a0a0a0"></div>
<div class="a" style="left:65px;top:781px;width:1px;height:16px;background:#a0a0a0"></div>
<div class="a" style="left:132px;top:781px;width:1px;height:16px;background:#a0a0a0"></div>
<div class="a" style="left:361px;top:781px;width:1px;height:16px;background:#a0a0a0"></div>
<div class="a" style="left:460px;top:781px;width:1px;height:16px;background:#a0a0a0"></div>
<div class="a" style="left:596px;top:781px;width:1px;height:16px;background:#a0a0a0"></div>
<div class="a" style="left:640px;top:781px;width:1px;height:16px;background:#a0a0a0"></div>
<div class="a" style="left:685px;top:781px;width:1px;height:16px;background:#a0a0a0"></div>
<div class="a" style="left:735px;top:781px;width:1px;height:16px;background:#a0a0a0"></div>
<div class="a" style="left:804px;top:781px;width:1px;height:16px;background:#a0a0a0"></div>
<div class="a" style="left:43px;top:785px;width:9px;height:9px;border-radius:50%;background:radial-gradient(circle at 45% 40%,#50f050,#18c818 70%);border:1px solid #0a3a0a"></div>
<div class="t" style="left:55px;top:784px;font-size:11px;color:#000">8</div>
<div class="t" style="left:67px;top:784px;font-size:11px;color:#000">Part 01</div>
<div class="t" style="left:134px;top:784px;font-size:11px;letter-spacing:-0.35px;color:#000">Linear Dimension <b style="font-size:12.5px;letter-spacing:0.05px">.14 &lt;= x &lt;= .16 in</b></div>
<div class="t" style="left:363px;top:784px;font-size:11px;color:#000">Final</div>
<div class="t" style="left:611px;top:784px;font-size:11px">No</div>
<div class="t" style="left:706px;top:784px;font-size:11px">1</div>
<div class="t" style="left:755px;top:784px;font-size:11px">Minor</div>
<div class="t" style="left:806px;top:784px;font-size:11px">3110526191.pdf <b>s.1/</b></div>
<div class="a" style="left:42px;top:797px;width:927px;height:16px;background:#fff;border-bottom:1px solid #a0a0a0"></div>
<div class="a" style="left:65px;top:797px;width:1px;height:16px;background:#a0a0a0"></div>
<div class="a" style="left:132px;top:797px;width:1px;height:16px;background:#a0a0a0"></div>
<div class="a" style="left:361px;top:797px;width:1px;height:16px;background:#a0a0a0"></div>
<div class="a" style="left:460px;top:797px;width:1px;height:16px;background:#a0a0a0"></div>
<div class="a" style="left:596px;top:797px;width:1px;height:16px;background:#a0a0a0"></div>
<div class="a" style="left:640px;top:797px;width:1px;height:16px;background:#a0a0a0"></div>
<div class="a" style="left:685px;top:797px;width:1px;height:16px;background:#a0a0a0"></div>
<div class="a" style="left:735px;top:797px;width:1px;height:16px;background:#a0a0a0"></div>
<div class="a" style="left:804px;top:797px;width:1px;height:16px;background:#a0a0a0"></div>
<div class="a" style="left:43px;top:801px;width:9px;height:9px;border-radius:50%;background:radial-gradient(circle at 45% 40%,#50f050,#18c818 70%);border:1px solid #0a3a0a"></div>
<div class="t" style="left:55px;top:800px;font-size:11px;color:#000">9</div>
<div class="t" style="left:67px;top:800px;font-size:11px;color:#000">Part 01</div>
<div class="t" style="left:134px;top:800px;font-size:11px;letter-spacing:-0.35px;color:#000">Linear Dimension <b style="font-size:12.5px;letter-spacing:0.05px">5.00 +/- .01 in</b></div>
<div class="t" style="left:363px;top:800px;font-size:11px;color:#000">Final</div>
<div class="t" style="left:611px;top:800px;font-size:11px">No</div>
<div class="t" style="left:706px;top:800px;font-size:11px">1</div>
<div class="t" style="left:755px;top:800px;font-size:11px">Minor</div>
<div class="t" style="left:806px;top:800px;font-size:11px">3110526191.pdf <b>s.1/</b></div>
<div class="a" style="left:67px;top:826px;width:902px;height:17px;background:#d4d0c8;border-top:1px solid #fff"></div>
<div class="a raised" style="left:67px;top:826px;width:15px;height:16px"></div>
<div class="a" style="left:71px;top:830px;border:4px solid transparent;border-right:4px solid #000;border-left:0"></div>
<div class="a raised" style="left:82px;top:826px;width:797px;height:16px"></div>
<div class="a hatch" style="left:879px;top:826px;width:75px;height:16px"></div>
<div class="a raised" style="left:954px;top:826px;width:15px;height:16px"></div>
<div class="a" style="left:959px;top:830px;border:4px solid transparent;border-left:4px solid #000;border-right:0"></div>
<div class="a" style="left:971px;top:648px;width:2px;height:197px;background:#404040"></div>
<div class="a" style="left:9px;top:845px;width:964px;height:1px;background:#fff"></div>
<div class="a" style="left:9px;top:847px;width:1428px;height:2px;background:#404040"></div>
<!-- bottom right -->
<div class="a" style="left:975px;top:626px;width:2px;height:222px;background:#404040"></div>
<div class="a" style="left:975px;top:626px;width:456px;height:1px;background:#404040"></div>
<div class="a" style="left:977px;top:646px;width:454px;height:1px;background:#fff"></div>
<div class="a raised" style="left:978px;top:648px;width:452px;height:17px"></div>
<div class="t" style="left:978px;top:651px;width:452px;text-align:center;font-weight:bold;font-size:12px">Requirement-Image: CN 2</div>
<div class="a" style="left:1430px;top:647px;width:1px;height:199px;background:#fff"></div>
<div class="a" style="left:1431px;top:626px;width:2px;height:222px;background:#404040"></div>
<div class="a white" style="left:1130px;top:694px;width:145px;height:118px"></div>
<svg class="a" style="left:1130px;top:694px" width="145" height="118" viewBox="1130 694 145 118" font-family="Liberation Sans, sans-serif">
<path d="M1210 712.5H1275M1222.5 743V713M1222.5 795V812" stroke="#000" stroke-width="1.2" fill="none"/>
<path d="M1222.5 713L1219 731H1226z" fill="none" stroke="#000" stroke-width="1"/>
<text x="1175.5" y="776.5" font-size="21" textLength="37" lengthAdjust="spacingAndGlyphs">1.25</text>
<text x="1223" y="766" font-size="21" textLength="37" lengthAdjust="spacingAndGlyphs">+.01</text>
<text x="1223" y="787.5" font-size="21" textLength="33" lengthAdjust="spacingAndGlyphs">-.01</text>
</svg>
<!-- status bar -->
<div class="a" style="left:5px;top:850px;width:1278px;height:17px;border:1px solid;border-color:#808080 #fff #fff #808080"></div>
<div class="a" style="left:1284px;top:850px;width:148px;height:17px;border:1px solid;border-color:#808080 #fff #fff #808080"></div>
<div class="t" style="left:10px;top:853px;font-size:11px">Characteristics: Total: <b>9</b>;&#160; <span style="color:#119911">Complete: </span><b style="color:#119911">9</b>;&#160; <span style="color:#dd2222">Incomplete: </span><b style="color:#dd2222">0</b>;&#160; Selected CN: <b>2</b></div>
<div class="t" style="left:884px;top:853px;font-size:11px">Filter: <b>All</b></div>
<div class="t" style="left:1119px;top:853px;font-size:11px">Profile: <b>Default</b></div>
<div class="a" style="left:0;top:870px;width:1440px;height:2px;background:#404040"></div>
<!-- DIALOG -->
<div class="a" style="left:414px;top:131px;width:613px;height:637px;background:#d4d0c8;border:1px solid;border-color:#d4d0c8 #404040 #404040 #d4d0c8"><div class="a" style="left:0;top:0;right:0;bottom:0;border:1px solid;border-color:#fff #808080 #808080 #fff"></div></div>
<div class="a" style="left:418px;top:134px;width:605px;height:18px;background:linear-gradient(90deg,#0a246a,#a6caf0)"></div>
<svg class="a" style="left:419px;top:135px" width="16" height="16" viewBox="0 0 16 16"><rect width="16" height="16" fill="#fff"/><ellipse cx="8" cy="8.5" rx="6.5" ry="5" fill="none" stroke="#7ab84a" stroke-width="1.2"/><path d="M3 6h9a2 2 0 0 1 2 2v3a2 2 0 0 1-2 2H5a2 2 0 0 1-2-2z" fill="#1a80b0"/><rect x="6" y="8" width="6" height="3.5" fill="#fff"/><circle cx="11" cy="7" r="1" fill="#e08030"/></svg>
<div class="t" style="left:438px;top:137px;font-size:12px;font-weight:bold;color:#fff">Characteristic Properties</div>
<div class="a raised" style="left:1005px;top:136px;width:16px;height:14px"></div><svg class="a" style="left:1005px;top:136px" width="16" height="14" viewBox="0 0 16 14"><path d="M4.5 3.5l7 7M11.5 3.5l-7 7" stroke="#000" stroke-width="1.7"/></svg>
<div class="a" style="left:418px;top:173px;width:605px;height:557px;border:1px solid;border-color:#fff #404040 #404040 #fff;box-shadow:inset -1px -1px 0 #808080"></div>
<div class="a" style="left:419px;top:155px;width:74px;height:19px;background:#d4d0c8;border-top:1px solid #fff;border-left:1px solid #fff;border-right:1px solid #404040;box-shadow:inset -1px 0 0 #808080"></div>
<div class="t" style="left:425px;top:157px;font-size:11px;">Requirement</div>
<div class="a" style="left:493px;top:157px;width:45px;height:16px;border-top:1px solid #fff;border-right:1px solid #404040;box-shadow:inset -1px 0 0 #808080"></div>
<div class="t" style="left:497px;top:159px;font-size:11px;">Results</div>
<div class="a" style="left:538px;top:157px;width:47px;height:16px;border-top:1px solid #fff;border-right:1px solid #404040;box-shadow:inset -1px 0 0 #808080"></div>
<div class="t" style="left:543px;top:159px;font-size:11px;">Planner</div>
<div class="a" style="left:427px;top:193px;width:585px;height:192px;border:1px solid #808080;box-shadow:inset 1px 1px 0 #fff,1px 1px 0 #fff"></div><div class="t" style="left:432px;top:188px;font-size:11px;background:#d4d0c8;padding:0 1px">Requirement Image</div>
<div class="a" style="left:440px;top:214px;width:441px;height:136px;border:1px solid;border-color:#404040 #fff #fff #404040;box-shadow:inset 1px 1px 0 #808080"></div>
<div class="a white" style="left:588px;top:223px;width:145px;height:118px"></div>
<svg class="a" style="left:588px;top:223px" width="145" height="118" viewBox="588 223 145 118" font-family="Liberation Sans, sans-serif">
<path d="M668 241.5H733M680.5 272V242M680.5 324V341" stroke="#000" stroke-width="1.2" fill="none"/>
<path d="M680.5 242L677 260H684z" fill="none" stroke="#000" stroke-width="1"/>
<text x="633.5" y="305" font-size="21" textLength="37" lengthAdjust="spacingAndGlyphs">1.25</text>
<text x="681" y="295" font-size="21" textLength="37" lengthAdjust="spacingAndGlyphs">+.01</text>
<text x="681" y="316.5" font-size="21" textLength="33" lengthAdjust="spacingAndGlyphs">-.01</text>
</svg>
<div class="a raised" style="left:896px;top:217px;width:109px;height:23px"></div><div class="t" style="left:896px;top:223px;width:109px;text-align:center;font-size:11px">Scale</div>
<div class="a raised" style="left:896px;top:245px;width:109px;height:23px"></div><div class="t" style="left:896px;top:251px;width:109px;text-align:center;font-size:11px">Crop Image...</div>
<div class="a raised" style="left:896px;top:273px;width:109px;height:23px"></div><div class="t" style="left:896px;top:279px;width:109px;text-align:center;font-size:11px">Rotate</div>
<div class="a raised" style="left:896px;top:301px;width:109px;height:23px"></div><div class="t" style="left:896px;top:307px;width:109px;text-align:center;font-size:11px">Remove</div>
<div class="a raised" style="left:896px;top:329px;width:109px;height:23px"></div><div class="t" style="left:896px;top:335px;width:109px;text-align:center;font-size:11px">OCR settings...</div>
<div class="a" style="left:444px;top:360px;width:13px;height:13px;background:#fff;border:1px solid;border-color:#808080 #fff #fff #808080;box-shadow:inset 1px 1px 0 #404040"></div>
<div class="t" style="left:460px;top:360px;font-size:11px;">Exclude Requirement Image from Export</div>
<div class="a" style="left:428px;top:401px;width:584px;height:120px;border:1px solid #808080;box-shadow:inset 1px 1px 0 #fff,1px 1px 0 #fff"></div><div class="t" style="left:433px;top:396px;font-size:11px;background:#d4d0c8;padding:0 1px">Requirement Structured</div>
<div class="t" style="left:436px;top:421px;font-size:11px;">Characteristic Type:</div>
<div class="a" style="left:543px;top:418px;width:461px;height:18px;background:#fff;border:1px solid;border-color:#808080 #fff #fff #808080"><div class="a" style="left:0;top:0;right:0;bottom:0;border:1px solid;border-color:#404040 #d4d0c8 #d4d0c8 #404040"></div></div><div class="t" style="left:546px;top:421px;font-size:11px"></div><div class="a" style="left:546px;top:421px;width:439px;height:12px;background:#0a246a"></div><div class="t" style="left:546px;top:421px;font-size:10.5px;color:#fff">Linear Dimension</div><div class="a raised" style="left:986px;top:420px;width:16px;height:14px"></div><div class="a" style="left:990px;top:426px;border:4px solid transparent;border-top:4px solid #000;border-bottom:0"></div>
<div class="t" style="left:436px;top:449px;font-size:11px;">Data Type:</div>
<div class="a" style="left:543px;top:446px;width:461px;height:18px;background:#fff;border:1px solid;border-color:#808080 #fff #fff #808080"><div class="a" style="left:0;top:0;right:0;bottom:0;border:1px solid;border-color:#404040 #d4d0c8 #d4d0c8 #404040"></div></div><div class="t" style="left:546px;top:449px;font-size:11px"></div><div class="t" style="left:546px;top:449px;font-size:11px">Tolerance</div><div class="a raised" style="left:986px;top:448px;width:16px;height:14px"></div><div class="a" style="left:990px;top:454px;border:4px solid transparent;border-top:4px solid #000;border-bottom:0"></div>
<div class="t" style="left:440px;top:482px;font-size:11px;">Nominal:</div>
<div class="a" style="left:487px;top:479px;width:100px;height:18px;background:#fff;border:1px solid;border-color:#808080 #fff #fff #808080"><div class="a" style="left:0;top:0;right:0;bottom:0;border:1px solid;border-color:#404040 #d4d0c8 #d4d0c8 #404040"></div></div><div class="t" style="left:490px;top:482px;font-size:11px">1.25</div>
<div class="t" style="left:593px;top:482px;font-size:11px;">+</div>
<div class="a" style="left:605px;top:479px;width:50px;height:18px;background:#fff;border:1px solid;border-color:#808080 #fff #fff #808080"><div class="a" style="left:0;top:0;right:0;bottom:0;border:1px solid;border-color:#404040 #d4d0c8 #d4d0c8 #404040"></div></div><div class="t" style="left:608px;top:482px;font-size:11px">.01</div>
<div class="t" style="left:660px;top:482px;font-size:11px;">-</div>
<div class="a" style="left:669px;top:479px;width:50px;height:18px;background:#fff;border:1px solid;border-color:#808080 #fff #fff #808080"><div class="a" style="left:0;top:0;right:0;bottom:0;border:1px solid;border-color:#404040 #d4d0c8 #d4d0c8 #404040"></div></div><div class="t" style="left:672px;top:482px;font-size:11px">.01</div>
<div class="t" style="left:723px;top:482px;font-size:11px;">Units:</div>
<div class="a" style="left:757px;top:479px;width:57px;height:18px;background:#fff;border:1px solid;border-color:#808080 #fff #fff #808080"><div class="a" style="left:0;top:0;right:0;bottom:0;border:1px solid;border-color:#404040 #d4d0c8 #d4d0c8 #404040"></div></div><div class="t" style="left:760px;top:482px;font-size:11px"></div><div class="t" style="left:760px;top:482px;font-size:11px">in</div><div class="a raised" style="left:796px;top:481px;width:16px;height:14px"></div><div class="a" style="left:800px;top:487px;border:4px solid transparent;border-top:4px solid #000;border-bottom:0"></div>
<div class="a" style="left:431px;top:536px;width:9px;height:9px;border-radius:50%;background:radial-gradient(circle at 45% 40%,#50f050,#18c818 70%);border:1px solid #0a3a0a"></div>
<div class="t" style="left:443px;top:535px;font-size:11px;color:#119911">Complete</div>
<div class="t" style="left:431px;top:558px;font-size:11px;">Number:</div>
<div class="a" style="left:529px;top:555px;width:83px;height:19px;background:#fff;border:1px solid;border-color:#808080 #fff #fff #808080"><div class="a" style="left:0;top:0;right:0;bottom:0;border:1px solid;border-color:#404040 #d4d0c8 #d4d0c8 #404040"></div></div><div class="t" style="left:532px;top:558px;font-size:11px">2</div>
<div class="t" style="left:629px;top:558px;font-size:11px;">Location:</div>
<div class="a" style="left:679px;top:555px;width:83px;height:19px;background:#d4d0c8;border:1px solid;border-color:#808080 #fff #fff #808080"><div class="a" style="left:0;top:0;right:0;bottom:0;border:1px solid;border-color:#404040 #d4d0c8 #d4d0c8 #404040"></div></div><div class="t" style="left:682px;top:558px;font-size:11px">526191.pdf s.1/</div>
<div class="t" style="left:772px;top:558px;font-size:11px;">Class:</div>
<div class="a" style="left:812px;top:555px;width:80px;height:19px;background:#fff;border:1px solid;border-color:#808080 #fff #fff #808080"><div class="a" style="left:0;top:0;right:0;bottom:0;border:1px solid;border-color:#404040 #d4d0c8 #d4d0c8 #404040"></div></div><div class="t" style="left:815px;top:558px;font-size:11px"></div><div class="t" style="left:815px;top:558px;font-size:11px">Minor</div><div class="a raised" style="left:874px;top:557px;width:16px;height:15px"></div><div class="a" style="left:878px;top:563px;border:4px solid transparent;border-top:4px solid #000;border-bottom:0"></div>
<div class="a" style="left:920px;top:557px;width:13px;height:13px;background:#fff;border:1px solid;border-color:#808080 #fff #fff #808080;box-shadow:inset 1px 1px 0 #404040"></div><svg class="a" style="left:920px;top:557px" width="13" height="13" viewBox="0 0 13 13"><path d="M3 6l2.5 2.5L10 3.5" stroke="#000" stroke-width="1.8" fill="none"/></svg>
<div class="t" style="left:937px;top:558px;font-size:11px;">Reportable</div>
<div class="t" style="left:431px;top:585px;font-size:11px;">Group:</div>
<div class="a" style="left:529px;top:582px;width:83px;height:18px;background:#fff;border:1px solid;border-color:#808080 #fff #fff #808080"><div class="a" style="left:0;top:0;right:0;bottom:0;border:1px solid;border-color:#404040 #d4d0c8 #d4d0c8 #404040"></div></div><div class="t" style="left:532px;top:585px;font-size:11px"></div><div class="t" style="left:532px;top:585px;font-size:11px">Default</div><div class="a raised" style="left:594px;top:584px;width:16px;height:14px"></div><div class="a" style="left:598px;top:590px;border:4px solid transparent;border-top:4px solid #000;border-bottom:0"></div>
<div class="t" style="left:617px;top:585px;font-size:11px;">Belongs To:</div>
<div class="a" style="left:679px;top:582px;width:83px;height:18px;background:#fff;border:1px solid;border-color:#808080 #fff #fff #808080"><div class="a" style="left:0;top:0;right:0;bottom:0;border:1px solid;border-color:#404040 #d4d0c8 #d4d0c8 #404040"></div></div><div class="t" style="left:682px;top:585px;font-size:11px"></div><div class="t" style="left:682px;top:585px;font-size:11px">Part 01</div><div class="a raised" style="left:744px;top:584px;width:16px;height:14px"></div><div class="a" style="left:748px;top:590px;border:4px solid transparent;border-top:4px solid #000;border-bottom:0"></div>
<div class="t" style="left:767px;top:585px;font-size:11px;">Places:</div>
<div class="a" style="left:807px;top:582px;width:85px;height:18px;background:#fff;border:1px solid;border-color:#808080 #fff #fff #808080"><div class="a" style="left:0;top:0;right:0;bottom:0;border:1px solid;border-color:#404040 #d4d0c8 #d4d0c8 #404040"></div></div><div class="t" style="left:810px;top:585px;font-size:11px">1</div>
<div class="t" style="left:897px;top:585px;font-size:11px;">Key:</div>
<div class="a" style="left:925px;top:582px;width:82px;height:18px;background:#fff;border:1px solid;border-color:#808080 #fff #fff #808080"><div class="a" style="left:0;top:0;right:0;bottom:0;border:1px solid;border-color:#404040 #d4d0c8 #d4d0c8 #404040"></div></div><div class="t" style="left:928px;top:585px;font-size:11px"></div><div class="t" style="left:928px;top:585px;font-size:11px">No</div><div class="a raised" style="left:989px;top:584px;width:16px;height:14px"></div><div class="a" style="left:993px;top:590px;border:4px solid transparent;border-top:4px solid #000;border-bottom:0"></div>
<div class="t" style="left:431px;top:610px;font-size:11px;">Inspection Method:</div>
<div class="a" style="left:529px;top:607px;width:144px;height:18px;background:#fff;border:1px solid;border-color:#808080 #fff #fff #808080"><div class="a" style="left:0;top:0;right:0;bottom:0;border:1px solid;border-color:#404040 #d4d0c8 #d4d0c8 #404040"></div></div><div class="t" style="left:532px;top:610px;font-size:11px"></div><div class="t" style="left:532px;top:610px;font-size:11px"></div><div class="a raised" style="left:655px;top:609px;width:16px;height:14px"></div><div class="a" style="left:659px;top:615px;border:4px solid transparent;border-top:4px solid #000;border-bottom:0"></div>
<div class="t" style="left:684px;top:610px;font-size:11px;">Sampling:</div>
<div class="a" style="left:736px;top:607px;width:156px;height:18px;background:#fff;border:1px solid;border-color:#808080 #fff #fff #808080"><div class="a" style="left:0;top:0;right:0;bottom:0;border:1px solid;border-color:#404040 #d4d0c8 #d4d0c8 #404040"></div></div><div class="t" style="left:739px;top:610px;font-size:11px"></div><div class="t" style="left:739px;top:610px;font-size:11px"></div><div class="a raised" style="left:874px;top:609px;width:16px;height:14px"></div><div class="a" style="left:878px;top:615px;border:4px solid transparent;border-top:4px solid #000;border-bottom:0"></div>
<div class="t" style="left:431px;top:632px;font-size:11px;">Comments:</div>
<div class="a" style="left:431px;top:650px;width:578px;height:68px;background:#fff;border:1px solid;border-color:#808080 #fff #fff #808080"><div class="a" style="left:0;top:0;right:0;bottom:0;border:1px solid;border-color:#404040 #d4d0c8 #d4d0c8 #404040"></div></div><div class="t" style="left:434px;top:678px;font-size:11px"></div>
<div class="a hatch" style="left:990px;top:653px;width:16px;height:63px"></div>
<div class="a raised" style="left:990px;top:653px;width:16px;height:15px"></div><div class="a" style="left:994px;top:658px;border:4px solid transparent;border-bottom:4px solid #000;border-top:0"></div>
<div class="a raised" style="left:990px;top:668px;width:16px;height:12px"></div>
<div class="a raised" style="left:990px;top:701px;width:16px;height:15px"></div><div class="a" style="left:994px;top:706px;border:4px solid transparent;border-top:4px solid #000;border-bottom:0"></div>
<div class="a raised" style="left:577px;top:736px;width:75px;height:24px"></div><div class="t" style="left:577px;top:743px;width:75px;text-align:center;font-size:11px">Previous</div>
<div class="a raised" style="left:657px;top:736px;width:64px;height:24px"></div><div class="t" style="left:657px;top:743px;width:64px;text-align:center;font-size:11px">Next</div>
<div class="a" style="left:727px;top:736px;width:65px;height:24px;border:1px solid #000"></div><div class="a raised" style="left:728px;top:737px;width:63px;height:22px"></div><div class="t" style="left:727px;top:743px;width:65px;text-align:center;font-size:11px">OK</div>
<div class="a raised" style="left:797px;top:736px;width:66px;height:24px"></div><div class="t" style="left:797px;top:743px;width:66px;text-align:center;font-size:11px">Cancel</div>
<svg class="a" style="left:450px;top:0;z-index:10" width="24" height="24" viewBox="450 0 24 24"><path d="M457.5 0.5V16.5L461 13L464 20.5L467.5 19L464.8 12H469.5Z" fill="#fff" stroke="#000" stroke-width="1"/></svg>
</body></html>
